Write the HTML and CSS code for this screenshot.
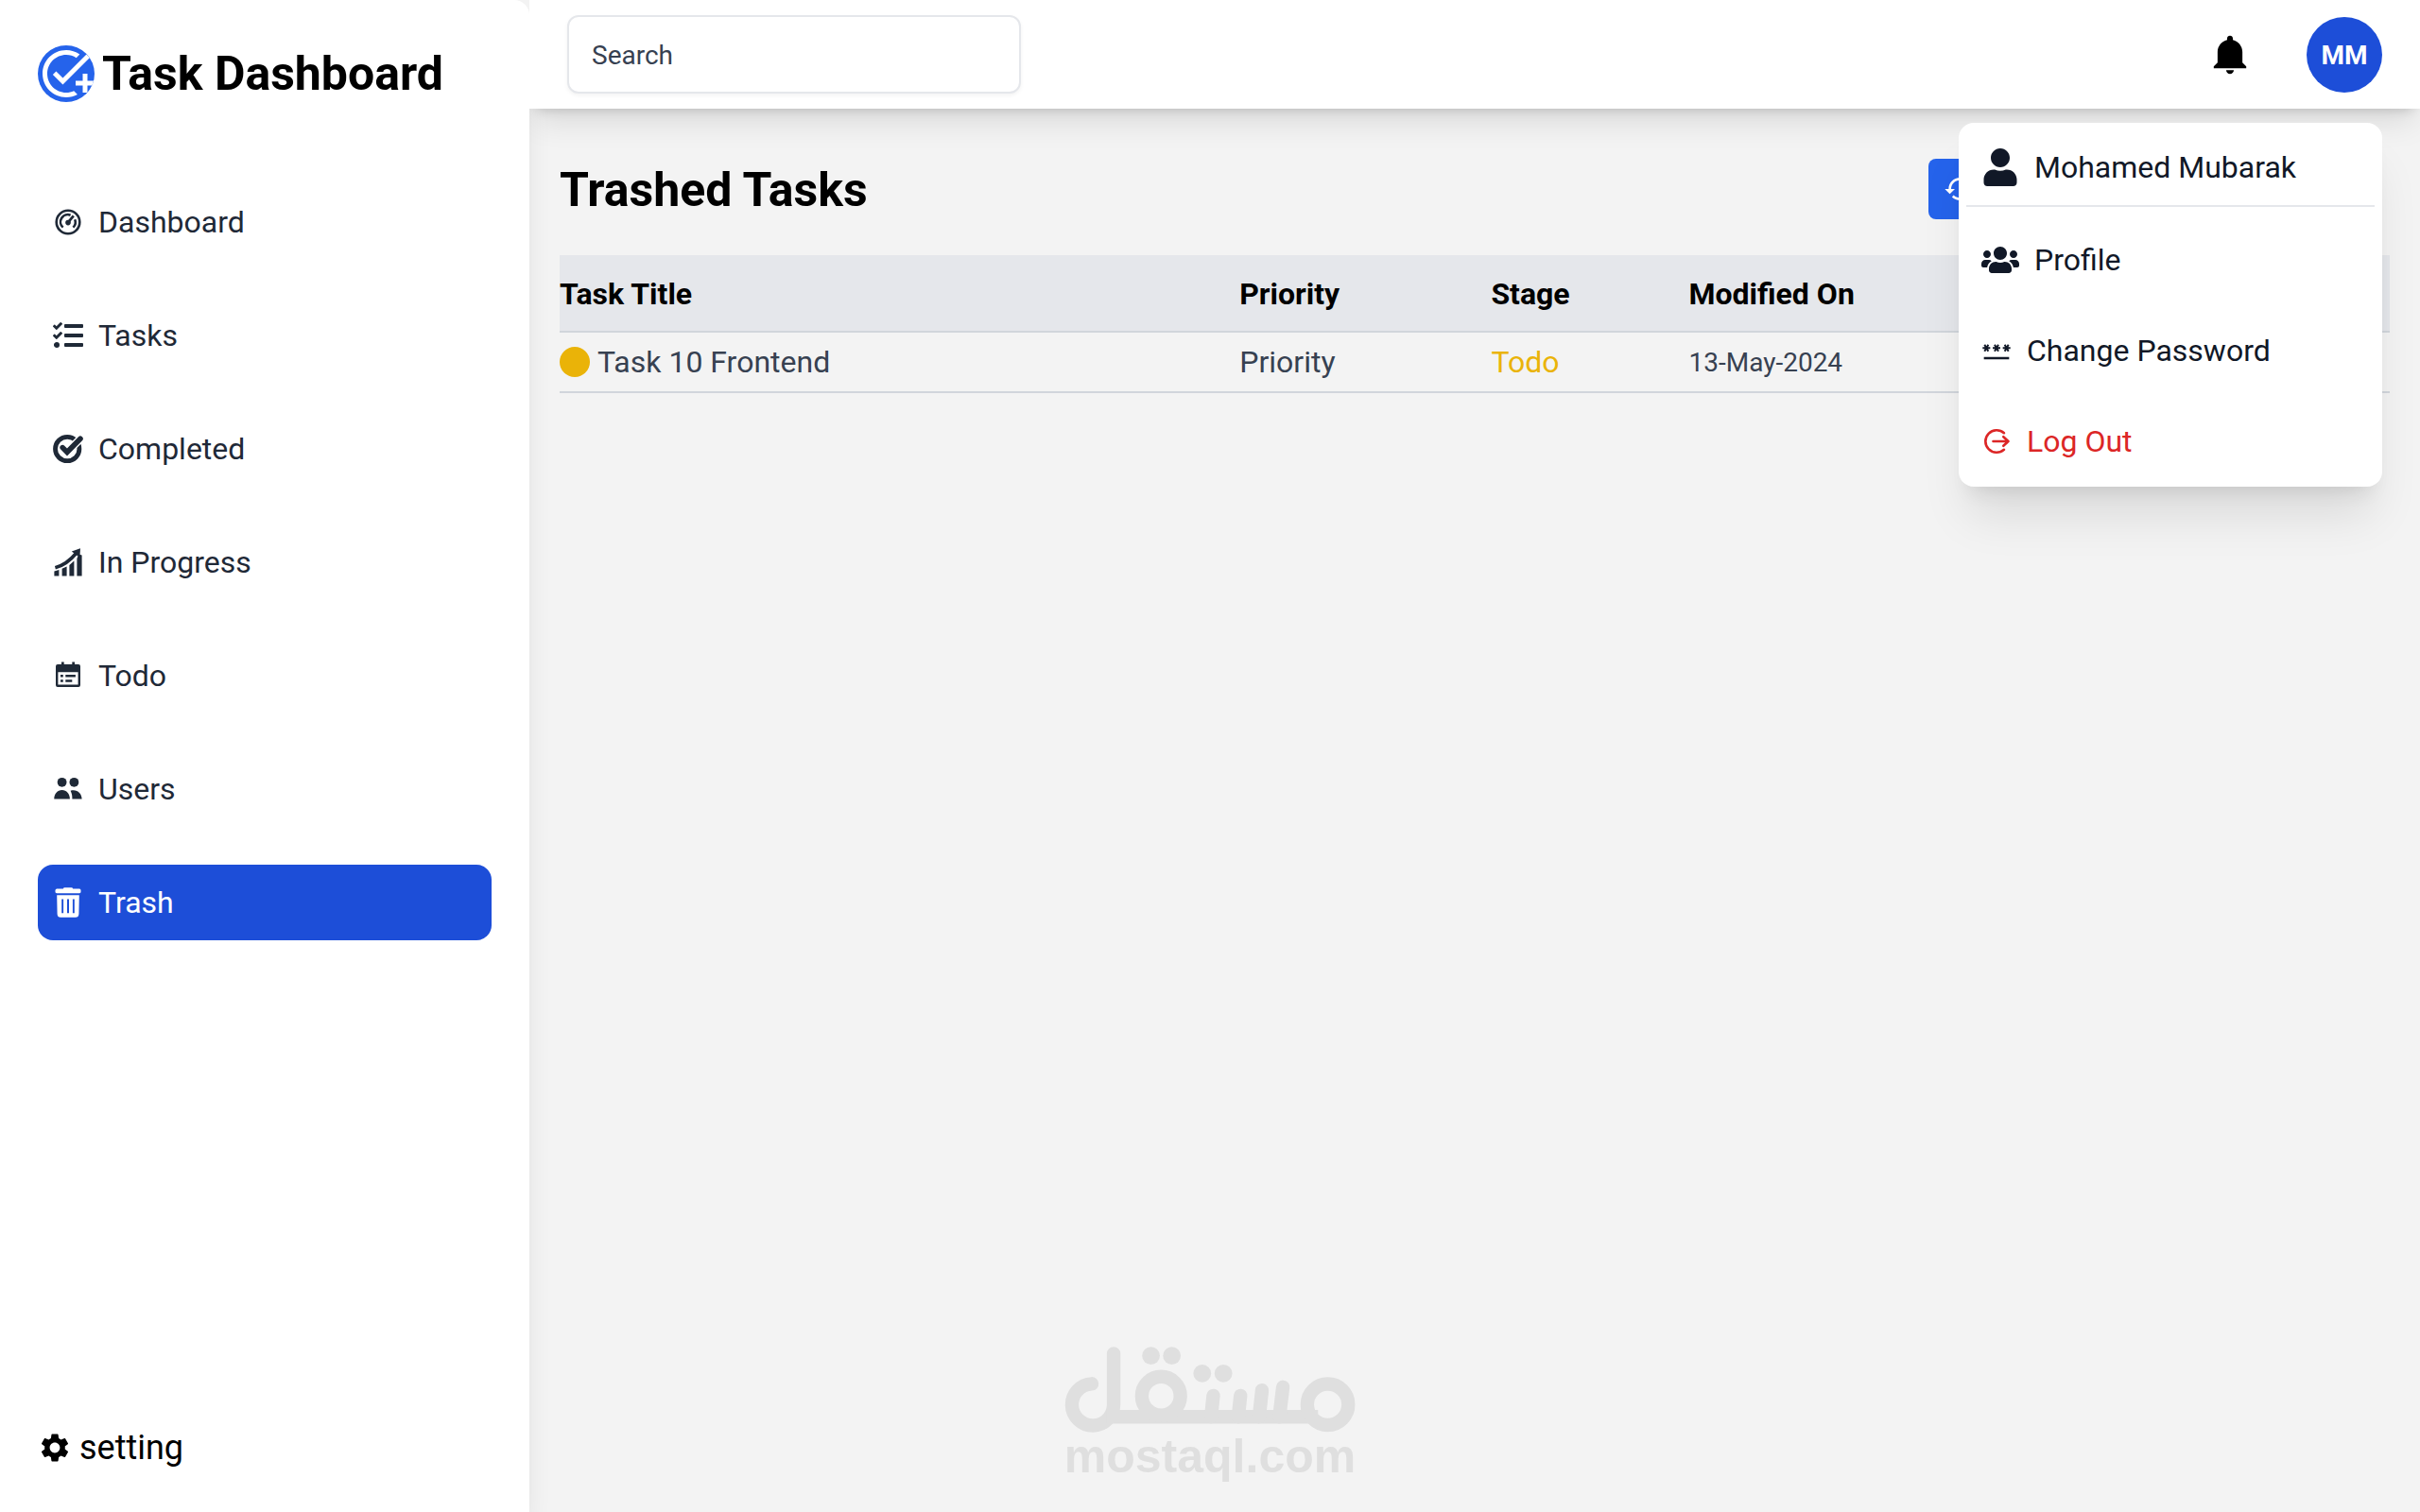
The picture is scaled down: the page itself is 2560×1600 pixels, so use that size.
FILE: index.html
```html
<!DOCTYPE html>
<html lang="en">
<head>
<meta charset="utf-8">
<title>Task Dashboard</title>
<link rel="stylesheet" href="styles.css">
</head>
<body>
<div class="layout">
  <aside class="sidebar">
    <a class="brand" href="#">
      <svg class="brand-logo" viewBox="0 0 24 24" aria-hidden="true"><path d="M22 5.18 10.59 16.6l-4.24-4.24 1.41-1.41 2.83 2.83 10-10L22 5.18zM12 20c-4.41 0-8-3.59-8-8s3.59-8 8-8c1.57 0 3.04.46 4.28 1.25l1.45-1.45A10.02 10.02 0 0 0 12 2C6.48 2 2 6.48 2 12s4.48 10 10 10c1.73 0 3.36-.44 4.78-1.22l-1.5-1.5c-1 .46-2.11.72-3.28.72zm7-5h-3v2h3v3h2v-3h3v-2h-3v-3h-2v3z"/></svg>
      <span>Task Dashboard</span>
    </a>
    <nav class="nav">
      <a class="nav-link" href="#">
        <svg class="icon" viewBox="0 0 32 32" aria-hidden="true"><g fill="none" stroke="currentColor"><circle cx="16" cy="16" r="12.3" stroke-width="2.6"/><path d="M10.6 21.6A7.7 7.7 0 0 1 18.6 8.7M23.2 13.2a7.7 7.7 0 0 1-1.8 8.4" stroke-width="2.6"/><path d="M16.2 16.2L21.8 9.4" stroke-width="2.8"/></g><circle cx="16" cy="16.6" r="2.8"/></svg>
        Dashboard
      </a>
      <a class="nav-link" href="#">
        <svg class="icon" viewBox="0 0 512 512" aria-hidden="true"><path d="M139.61 35.5a12 12 0 0 0-17 0L58.93 98.81l-22.7-22.12a12 12 0 0 0-17 0L3.53 92.41a12 12 0 0 0 0 17l47.59 47.4a12.78 12.78 0 0 0 17.61 0l15.59-15.62L156.52 69a12.09 12.09 0 0 0 .09-17zm0 159.19a12 12 0 0 0-17 0l-63.68 63.72-22.7-22.1a12 12 0 0 0-17 0L3.53 252a12 12 0 0 0 0 17L51 316.5a12.77 12.77 0 0 0 17.6 0l15.7-15.69 72.2-72.22a12 12 0 0 0 .09-16.9zM64 368c-26.49 0-48.59 21.5-48.59 48S37.53 464 64 464a48 48 0 0 0 0-96zm432 16H208a16 16 0 0 0-16 16v32a16 16 0 0 0 16 16h288a16 16 0 0 0 16-16v-32a16 16 0 0 0-16-16zm0-320H208a16 16 0 0 0-16 16v32a16 16 0 0 0 16 16h288a16 16 0 0 0 16-16V80a16 16 0 0 0-16-16zm0 160H208a16 16 0 0 0-16 16v32a16 16 0 0 0 16 16h288a16 16 0 0 0 16-16v-32a16 16 0 0 0-16-16z"/></svg>
        Tasks
      </a>
      <a class="nav-link" href="#">
        <svg class="icon" viewBox="0 0 32 32" aria-hidden="true"><g fill="none"><circle cx="15.2" cy="16" r="12.7" stroke="currentColor" stroke-width="4.8"/><path d="M10.2 14.6l4.8 4.9L29 5.2" stroke="#fff" stroke-width="8.4"/><path d="M10.2 14.6l4.8 4.9L29 5.2" stroke="currentColor" stroke-width="5.6" stroke-linecap="round"/></g></svg>
        Completed
      </a>
      <a class="nav-link" href="#">
        <svg class="icon" viewBox="0 0 32 32" aria-hidden="true"><path d="M1.4 25.6l5 -1.6V30.4h-5zM9.6 22.8l5-2.4v10h-5zM17.4 19l5-4.4v15.8h-5zM25.4 12l2-4.4 3.2 0.8V30.4h-5.2z"/><path d="M2.4 21.7C11 19.5 18 14.500 25 6" fill="none" stroke="currentColor" stroke-width="3.6"/><path d="M19.800 4.400L29 1.200 28.400 11z"/></svg>
        In Progress
      </a>
      <a class="nav-link" href="#">
        <svg class="icon" viewBox="0 0 32 32" aria-hidden="true"><path fill-rule="evenodd" d="M9 1.500h2.700v2.600h8.600V1.500H23v2.600h4a2 2 0 0 1 2 2V26a2 2 0 0 1-2 2H5a2 2 0 0 1-2-2V6.100a2 2 0 0 1 2-2h4zM5.400 12.200v13.300h21.200V12.200z"/><path d="M8 14.900h2.800v2.600H8zM13.300 14.900h10.600v2.600H13.300zM8 20.200h2.800v2.600H8zM13.300 20.200h7v2.600h-7z"/></svg>
        Todo
      </a>
      <a class="nav-link" href="#">
        <svg class="icon" viewBox="0 0 32 32" aria-hidden="true"><circle cx="9.600" cy="8.800" r="4.900"/><circle cx="22.400" cy="8.800" r="4.900"/><path d="M1.300 26.600c0-5.600 3.600-9.500 8.300-9.500s8.300 3.900 8.300 9.500zM18.600 17.700c6.400-2.100 12 2.600 12 8.900H20.400c.1-3.600-.3-5.700-1.800-8.900z"/></svg>
        Users
      </a>
      <a class="nav-link active" href="#" aria-current="page">
        <svg class="icon" viewBox="0 0 32 32" aria-hidden="true"><path d="M10.800 1.600q.3-1.300 1.600-1.300h7.200q1.300 0 1.600 1.300H28q1.600 0 1.600 2.400T28 6.300H4Q2.400 6.300 2.400 4T4 1.600z"/><path fill-rule="evenodd" d="M4.200 8.200h23.600l-.4 20q-.2 3.600-3.600 3.600H8.200q-3.400 0-3.600-3.600zM9.200 12.400v14.800h1.900V12.400zM15 12.400v14.800h2V12.400zM20.900 12.400v14.800h1.900V12.400z"/></svg>
        Trash
      </a>
    </nav>
    <a class="settings" href="#">
      <svg class="settings-icon" viewBox="0 0 24 24" aria-hidden="true"><path d="M19.140 12.940c.04-.3.06-.61.06-.94 0-.32-.02-.64-.07-.94l2.030-1.580a.49.490 0 0 0 .12-.61l-1.920-3.320a.488.488 0 0 0-.59-.22l-2.390.96c-.5-.38-1.030-.7-1.620-.94l-.36-2.540a.484.484 0 0 0-.48-.41h-3.840c-.24 0-.43.17-.47.41l-.36 2.540c-.59.24-1.130.57-1.620.94l-2.390-.96c-.22-.08-.47 0-.59.22L2.740 8.870c-.12.21-.08.47.12.61l2.030 1.580c-.05.3-.09.63-.09.94s.02.64.07.94l-2.030 1.580a.49.490 0 0 0-.12.61l1.920 3.320c.12.22.37.29.59.22l2.390-.96c.5.38 1.030.7 1.620.94l.36 2.540c.05.24.24.41.48.41h3.840c.24 0 .44-.17.47-.41l.36-2.540c.59-.24 1.130-.56 1.620-.94l2.390.96c.22.080.47 0 .59-.22l1.920-3.320c.12-.22.07-.47-.12-.61l-2.010-1.580zM12 15.600c-1.980 0-3.600-1.620-3.600-3.600s1.620-3.600 3.600-3.600 3.600 1.620 3.600 3.600-1.620 3.600-3.600 3.600z"/></svg>
      setting
    </a>
  </aside>

  <div class="page">
    <header class="topbar">
      <input class="search" type="search" placeholder="Search" aria-label="Search">
      <div class="topbar-actions">
        <button class="bell" type="button" aria-label="Notifications">
          <svg viewBox="0 0 512 512" aria-hidden="true"><path d="M256 464c22.779 0 41.411-18.719 41.411-41.600h-82.823c0 22.881 18.633 41.600 41.412 41.600zm134.589-124.800V224.800c0-63.440-44.516-117.518-103.530-131.041V79.200c0-17.682-14.078-31.200-31.059-31.200s-31.059 13.518-31.059 31.200v14.559c-59.015 13.523-103.530 67.601-103.530 131.041v114.400L80 380.800v20.800h352v-20.800l-41.411-41.600z"/></svg>
        </button>
        <div class="account">
          <button class="avatar" type="button" aria-haspopup="true" aria-expanded="true">MM</button>
          <div class="menu">
            <a class="menu-item menu-user" href="#">
              <svg class="menu-icon-lg" viewBox="-32 0 512 512" aria-hidden="true"><path d="M224 256c70.700 0 128-57.300 128-128S294.700 0 224 0 96 57.300 96 128s57.300 128 128 128zm89.600 32h-16.700c-22.200 10.200-46.900 16-72.900 16s-50.600-5.800-72.900-16h-16.700C60.200 288 0 348.200 0 422.400V464c0 26.500 21.500 48 48 48h352c26.500 0 48-21.500 48-48v-41.600c0-74.200-60.200-134.400-134.400-134.400z"/></svg>
              Mohamed Mubarak
            </a>
            <a class="menu-item" href="#">
              <svg class="menu-icon-lg" viewBox="0 -64 640 640" aria-hidden="true"><path d="M96 224c35.300 0 64-28.700 64-64s-28.700-64-64-64-64 28.700-64 64 28.700 64 64 64zm448 0c35.300 0 64-28.700 64-64s-28.700-64-64-64-64 28.700-64 64 28.700 64 64 64zm32 32h-64c-17.600 0-33.500 7.100-45.100 18.600 40.300 22.100 68.900 62 75.100 109.400h66c17.700 0 32-14.300 32-32v-32c0-35.300-28.700-64-64-64zm-256 0c61.900 0 112-50.100 112-112S381.900 32 320 32 208 82.100 208 144s50.100 112 112 112zm76.800 32h-8.300c-20.800 10-43.900 16-68.500 16s-47.600-6-68.500-16h-8.300C179.600 288 128 339.600 128 403.200V432c0 26.500 21.500 48 48 48h288c26.500 0 48-21.500 48-48v-28.800c0-63.600-51.600-115.200-115.200-115.200zm-223.700-13.400C161.500 263.100 145.600 256 128 256H64c-35.300 0-64 28.700-64 64v32c0 17.700 14.300 32 32 32h65.900c6.300-47.400 34.900-87.300 75.200-109.400z"/></svg>
              Profile
            </a>
            <a class="menu-item" href="#">
              <svg class="icon" viewBox="0 0 24 24" aria-hidden="true"><path d="M2 17h20v2H2v-2zm1.150-4.050L4 11.470l.85 1.480 1.300-.75-.85-1.480H7v-1.500H5.300l.85-1.470L4.850 7 4 8.470 3.150 7l-1.300.75.850 1.470H1v1.500h1.700l-.85 1.480 1.300.75zm6.700-.75 1.300.75.850-1.480.85 1.480 1.300-.75-.85-1.480H15v-1.500h-1.700l.85-1.470-1.300-.75L12 8.470 11.150 7l-1.300.75.850 1.470H9v1.500h1.700l-.85 1.480zM23 9.220h-1.700l.85-1.470-1.300-.75L20 8.470 19.150 7l-1.300.75.850 1.470H17v1.500h1.700l-.85 1.480 1.300.75.850-1.480.85 1.480 1.300-.75-.85-1.480H23v-1.500z"/></svg>
              Change Password
            </a>
            <a class="menu-item danger" href="#">
              <svg class="icon" viewBox="0 0 32 32" aria-hidden="true"><g fill="none" stroke="currentColor" stroke-width="2.600" stroke-linecap="round" stroke-linejoin="round"><path d="M24 7.200A11.800 11.800 0 1 0 24 24.800"/><path d="M12.500 16H28.500M23.300 11.200L28.500 16l-5.200 4.800"/></g></svg>
              Log Out
            </a>
          </div>
        </div>
      </div>
    </header>

    <main class="content">
      <div class="heading-row">
        <h1>Trashed Tasks</h1>
        <div class="heading-actions">
          <button class="restore" type="button" aria-label="Restore all">
            <svg class="icon" viewBox="0 0 24 24" aria-hidden="true"><path d="M13 3c-4.970 0-9 4.030-9 9H1l3.890 3.890.07.14L9 12H6c0-3.870 3.130-7 7-7s7 3.130 7 7-3.130 7-7 7c-1.930 0-3.680-.79-4.940-2.060l-1.420 1.420C8.270 19.990 10.510 21 13 21c4.970 0 9-4.030 9-9s-4.030-9-9-9zm-1 5v5l4.280 2.540.72-1.210-3.500-2.080V8H12z"/></svg>
          </button>
        </div>
      </div>
      <table class="tasks">
        <colgroup><col class="col-title"><col class="col-priority"><col class="col-stage"><col class="col-date"></colgroup>
        <thead>
          <tr><th scope="col">Task Title</th><th scope="col">Priority</th><th scope="col">Stage</th><th scope="col">Modified On</th></tr>
        </thead>
        <tbody>
          <tr>
            <td><div class="task-name"><span class="dot"></span>Task 10 Frontend</div></td>
            <td>Priority</td>
            <td class="stage">Todo</td>
            <td class="date">13-May-2024</td>
          </tr>
        </tbody>
      </table>
    </main>
  </div>
</div>

<div class="watermark">
  <svg class="watermark-logo" viewBox="138 78 920 272" aria-hidden="true">
    <g fill="none" stroke="currentColor" stroke-width="43">
      <path d="M225 195.500A66 66 0 1 0 294 262V100" stroke-linecap="round"/>
      <path d="M270 300H940"/>
      <circle cx="444" cy="234" r="61"/>
      <circle cx="971" cy="261" r="65"/>
      <path d="M609 233L602 300M695 233L688 300M763 216L754 300M829 206L818 300" stroke-linecap="round"/>
    </g>
    <circle cx="412" cy="107" r="28"/><circle cx="478" cy="107" r="28"/><circle cx="574" cy="163" r="28"/><circle cx="641" cy="163" r="28"/>
  </svg>
  <span>mostaql.com</span>
</div>
</body>
</html>
```
FILE: styles.css
```css
* { box-sizing: border-box; }

body {
  margin: 0;
  background: #f3f3f3;
  color: #000;
  font-family: Roboto, "Liberation Sans", sans-serif;
  font-size: 32px;
  line-height: 48px;
}

a { color: inherit; text-decoration: none; }
button { border: 0; padding: 0; font: inherit; cursor: pointer; }
svg { display: block; flex: none; fill: currentColor; }

.layout {
  display: grid;
  grid-template-columns: 560px minmax(0, 1fr);
  min-height: 100vh;
}

.icon { width: 32px; height: 32px; }

/* Sidebar */
.sidebar {
  display: flex;
  flex-direction: column;
  padding: 40px;
  background: #fff;
  border-radius: 0 16px 0 0;
  box-shadow: 0 20px 30px -6px rgba(0, 0, 0, .1), 0 8px 12px -8px rgba(0, 0, 0, .1);
}

.brand {
  display: flex;
  align-items: center;
  gap: 8px;
  height: 75px;
  font-size: 50px;
  font-weight: 700;
}

.brand-logo {
  width: 60px;
  height: 60px;
  border-radius: 50%;
  background: #2563eb;
  color: #fff;
}

.nav {
  display: flex;
  flex-direction: column;
  gap: 40px;
  padding-top: 80px;
}

.nav-link {
  display: flex;
  align-items: center;
  gap: 16px;
  height: 80px;
  padding: 0 16px;
  border-radius: 16px;
  color: #1f2937;
}

.nav-link.active { background: #1d4ed8; color: #fff; }

.settings {
  display: flex;
  align-items: center;
  gap: 8px;
  margin-top: auto;
  padding-bottom: 4px;
  font-size: 36px;
}

.settings-icon { width: 36px; height: 36px; }

/* Top bar */
.page { overflow: hidden; }

.topbar {
  display: flex;
  align-items: center;
  justify-content: space-between;
  position: relative;
  padding: 16px 40px;
  background: #fff;
  box-shadow: 0 20px 30px -6px rgba(0, 0, 0, .1), 0 8px 12px -8px rgba(0, 0, 0, .2);
}

.search {
  width: 480px;
  height: 83px;
  padding: 2px 24px 0;
  border: 2px solid #e5e7eb;
  border-radius: 12px;
  box-shadow: 0 2px 4px rgba(0, 0, 0, .05);
  font: inherit;
  font-size: 28px;
  color: #374151;
  appearance: none;
}

.search::placeholder { color: #374151; opacity: 1; }

.topbar-actions { display: flex; align-items: center; gap: 56px; }

.bell { background: none; }
.bell svg { width: 50px; height: 50px; }

.account { position: relative; }

.avatar {
  display: block;
  width: 80px;
  height: 80px;
  padding-top: 2px;
  border-radius: 50%;
  background: #1d4ed8;
  color: #fff;
  font-size: 28px;
  font-weight: 700;
}

.menu {
  position: absolute;
  top: calc(100% + 32px);
  right: 0;
  width: 448px;
  padding: 0 8px 8px;
  background: #fff;
  border-radius: 16px;
  box-shadow: 0 40px 50px -10px rgba(0, 0, 0, .1), 0 16px 20px -12px rgba(0, 0, 0, .1);
  color: #111827;
}

.menu-item {
  display: flex;
  align-items: center;
  gap: 16px;
  height: 80px;
  margin-top: 16px;
  padding: 0 16px;
}

.menu-user { height: 89px; margin-top: 0; padding-top: 8px; border-bottom: 2px solid #e5e7eb; }
.menu-user + .menu-item { margin-top: 16px; }
.menu-icon-lg { width: 40px; height: 40px; }
.danger { color: #dc2626; }

/* Content */
.content { padding: 53px 32px; }

.heading-row {
  display: flex;
  align-items: center;
  justify-content: space-between;
  margin-bottom: 38px;
}

h1 { margin: 0; padding-top: 2px; font-size: 50px; font-weight: 700; }

.heading-actions { display: flex; width: 488px; }

.restore {
  width: 224px;
  height: 64px;
  padding: 0 16px;
  border-radius: 8px;
  background: #2563eb;
  color: #fff;
}

.tasks {
  width: 100%;
  table-layout: fixed;
  border-collapse: collapse;
  text-align: left;
}

.col-title { width: 37.15%; }
.col-priority { width: 13.75%; }
.col-stage { width: 10.8%; }

.tasks th { height: 81px; padding: 2px 0 0; background: #e5e7eb; font-weight: 700; }
.tasks td { height: 64px; padding: 0; color: #374151; }
.tasks tr { border-bottom: 2px solid #d1d5db; }

.task-name { display: flex; align-items: center; gap: 8px; }
.dot { width: 32px; height: 32px; border-radius: 50%; background: #eab308; }
.tasks .stage { color: #eab308; }
.tasks .date { padding-top: 2px; font-size: 28px; }

/* Watermark over the page */
.watermark {
  position: fixed;
  bottom: 34px;
  left: 50%;
  display: flex;
  flex-direction: column;
  align-items: center;
  transform: translateX(-50%);
  color: #dfdfdf;
  font: 700 50px/50px "Liberation Sans", sans-serif;
}

.watermark-logo { width: 308px; height: 91px; }
```
